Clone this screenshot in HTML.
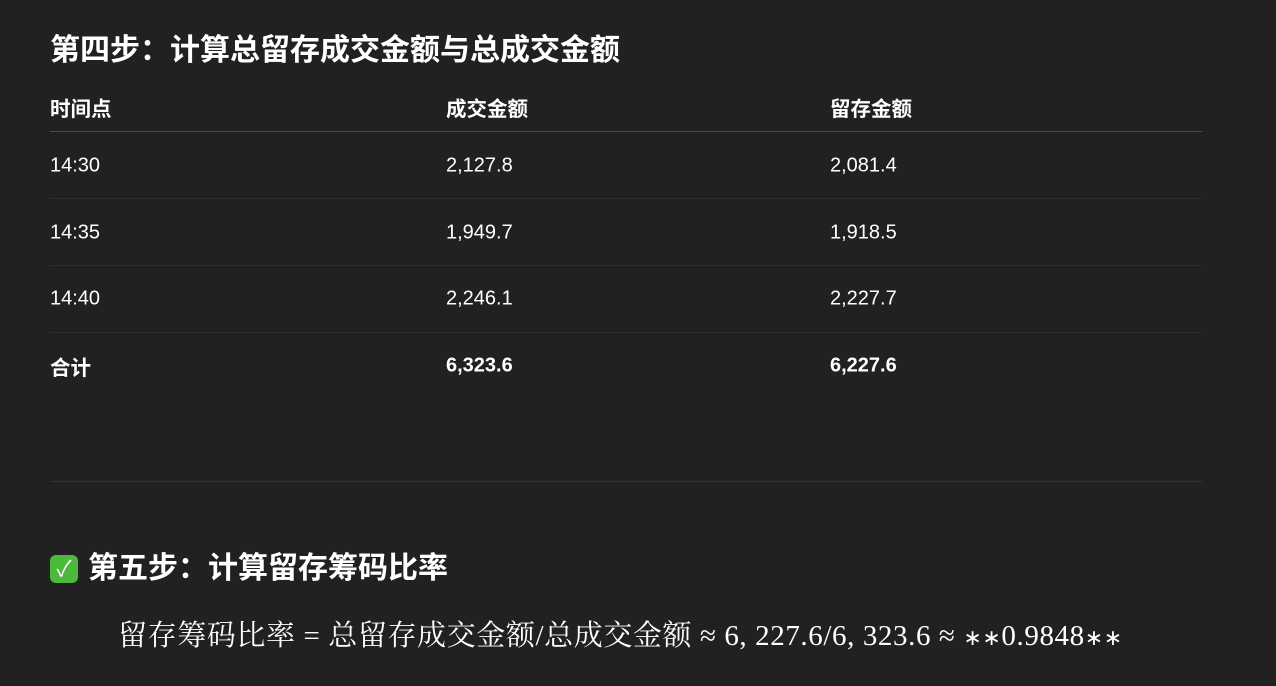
<!DOCTYPE html>
<html><head><meta charset="utf-8"><style>
body{margin:0;background:#212121;color:#fff;font-family:"Liberation Sans","Noto Sans CJK SC",sans-serif;width:1276px;height:686px;overflow:hidden;position:relative}
.a{position:absolute;white-space:nowrap}
h2{margin:0;font-size:30px;font-weight:bold;line-height:36px}
.line{position:absolute;left:50px;width:1152px;height:1px}
.c{position:absolute;font-size:20px;letter-spacing:0;transform:translateY(-50%)}
.h{font-weight:bold;font-size:20.5px;letter-spacing:0}
</style></head><body>
<div class="a" style="left:50px;top:33px"><h2>第四步：计算总留存成交金额与总成交金额</h2></div>
<div class="c h" style="left:50px;top:107px">时间点</div>
<div class="c h" style="left:446px;top:107px">成交金额</div>
<div class="c h" style="left:830px;top:107px">留存金额</div>
<div class="line" style="top:131px;background:#4a4a4a"></div>
<div class="c" style="left:50px;top:166px">14:30</div><div class="c" style="left:446px;top:166px">2,127.8</div><div class="c" style="left:830px;top:166px">2,081.4</div>
<div class="line" style="top:198px;background:#2e2e2e"></div>
<div class="c" style="left:50px;top:233px">14:35</div><div class="c" style="left:446px;top:233px">1,949.7</div><div class="c" style="left:830px;top:233px">1,918.5</div>
<div class="line" style="top:265px;background:#2e2e2e"></div>
<div class="c" style="left:50px;top:299px">14:40</div><div class="c" style="left:446px;top:299px">2,246.1</div><div class="c" style="left:830px;top:299px">2,227.7</div>
<div class="line" style="top:332px;background:#2e2e2e"></div>
<div class="c h" style="left:50px;top:366px">合计</div><div class="c" style="left:446px;top:366px;font-weight:bold">6,323.6</div><div class="c" style="left:830px;top:366px;font-weight:bold">6,227.6</div>
<div class="line" style="top:481px;background:#333"></div>
<div class="a" style="left:50px;top:551px;display:flex;align-items:center">
<span style="display:inline-block;width:28px;height:28px;border-radius:6px;background:#4cb83c;color:#fff;font-size:22px;line-height:28px;text-align:center;margin-right:10px">✓</span>
<h2>第五步：计算留存筹码比率</h2></div>
<div class="a" style="left:118px;top:613px;font-size:29px;letter-spacing:0.6px;font-family:'Liberation Serif','Noto Serif CJK SC',serif">留存筹码比率 = 总留存成交金额/总成交金额 ≈ 6, 227.6/6, 323.6 ≈ <span style="font-size:22px">∗∗</span>0.9848<span style="font-size:22px">∗∗</span></div>
</body></html>
